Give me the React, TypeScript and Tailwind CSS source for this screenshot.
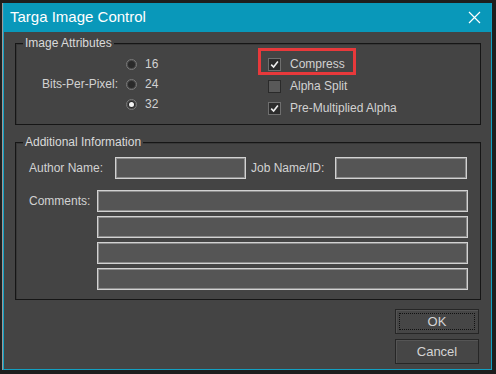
import React from "react";

const Radio = ({ checked }: { checked?: boolean }) => (
  <span className="flex h-[11px] w-[11px] items-center justify-center rounded-full border border-[#7c7c7c] bg-[#2a2a2a] shadow-[inset_0_0_0_1px_#4a4a4a]">
    {checked && <span className="h-[5px] w-[5px] rounded-full bg-[#f2f2f2]" />}
  </span>
);

const Check = ({ checked }: { checked?: boolean }) => (
  <span
    className={
      checked
        ? "flex h-[13px] w-[13px] items-center justify-center border border-[#6f6f6f] bg-[#2c2c2c]"
        : "flex h-[13px] w-[13px] items-center justify-center border border-[#2a2a2a] bg-[#595959]"
    }
  >
    {checked && (
      <svg width="9" height="9" viewBox="0 0 9 9">
        <path d="M1.2 4.6 L3.6 7 L7.9 1.6" stroke="#eeeeee" strokeWidth="1.6" fill="none" />
      </svg>
    )}
  </span>
);

const Group = ({
  title,
  className,
  children,
}: {
  title: string;
  className: string;
  children: React.ReactNode;
}) => (
  <div className={`relative border border-[#161616] shadow-[inset_1px_1px_0_#383838] ${className}`}>
    <span className="absolute -top-[8px] left-[7px] bg-[#444444] px-[2px] text-[12px] leading-[14px] text-[#dadada]">
      {title}
    </span>
    {children}
  </div>
);

const Field = ({ className }: { className: string }) => (
  <div className={`h-[22px] border border-[#d2d2d2] bg-[#555555] shadow-[inset_0_0_0_1px_#8c8c8c] ${className}`} />
);

const App = () => {
  return (
    <div className="h-[374px] w-[496px] overflow-hidden bg-[#1e1e1e] pl-[3px] pt-[3px] font-['Liberation_Sans',Arial,sans-serif]">
      <div className="flex h-[367px] w-[489px] flex-col border-x border-b border-[#12a0c2] bg-[#444444] shadow-[-1px_0_0_#9a9a9a]">
        {/* title bar */}
        <div className="flex h-[29px] shrink-0 items-center justify-between bg-[#0998ba] pl-[6px] pr-[10px]">
          <span className="text-[15px] text-white">Targa Image Control</span>
          <svg width="13" height="13" viewBox="0 0 13 13">
            <path d="M1 1 L12 12 M12 1 L1 12" stroke="#ffffff" strokeWidth="1.2" />
          </svg>
        </div>

        <div className="flex flex-1 flex-col pl-[11px] pr-[10px] pt-[11px] text-[12px] text-[#d2d2d2]">
          <Group title="Image Attributes" className="h-[82px]">
            <div className="flex items-start">
              <div className="mt-[10px] flex h-[60px] w-[102px] items-center justify-end">Bits-Per-Pixel:</div>
              <div className="ml-[8px] flex w-[142px] flex-col pt-[10px]">
                {["16", "24", "32"].map((v) => (
                  <div key={v} className="flex h-[20px] items-center gap-[8px]">
                    <Radio checked={v === "32"} />
                    <span>{v}</span>
                  </div>
                ))}
              </div>
              <div className="flex flex-col pt-[9px]">
                {[
                  ["Compress", true],
                  ["Alpha Split", false],
                  ["Pre-Multiplied Alpha", true],
                ].map(([label, on]) => (
                  <div key={label as string} className="flex h-[22px] items-center gap-[9px]">
                    <Check checked={on as boolean} />
                    <span>{label}</span>
                  </div>
                ))}
              </div>
            </div>
            <div className="absolute left-[242px] top-[4px] h-[27px] w-[98px] border-[3px] border-[#e8393b]" />
          </Group>

          <Group title="Additional Information" className="mt-[17px] h-[158px] pl-[13px] pt-[14px]">
            <div className="flex h-[22px] items-center">
              <span className="w-[86px]">Author Name:</span>
              <Field className="w-[131px]" />
              <span className="ml-[5px] w-[84px]">Job Name/ID:</span>
              <Field className="w-[132px]" />
            </div>
            <div className="mt-[11px] flex items-start">
              <span className="flex h-[22px] w-[68px] items-center">Comments:</span>
              <div className="flex flex-col gap-[4px]">
                <Field className="w-[371px]" />
                <Field className="w-[371px]" />
                <Field className="w-[371px]" />
                <Field className="w-[371px]" />
              </div>
            </div>
          </Group>

          <div className="mr-[2px] mt-[9px] flex flex-col gap-[5px] self-end text-[13px] text-[#d4d4d4]">
            <button className="flex h-[25px] w-[84px] border border-[#262626] bg-[#464646] p-[3px] shadow-[inset_1px_1px_0_#555555]">
              <span className="flex flex-1 items-center justify-center border border-dotted border-[#111111]">OK</span>
            </button>
            <button className="flex h-[25px] w-[84px] items-center justify-center border border-[#262626] bg-[#464646] shadow-[inset_1px_1px_0_#555555]">
              Cancel
            </button>
          </div>
        </div>
      </div>
    </div>
  );
};

export default App;
